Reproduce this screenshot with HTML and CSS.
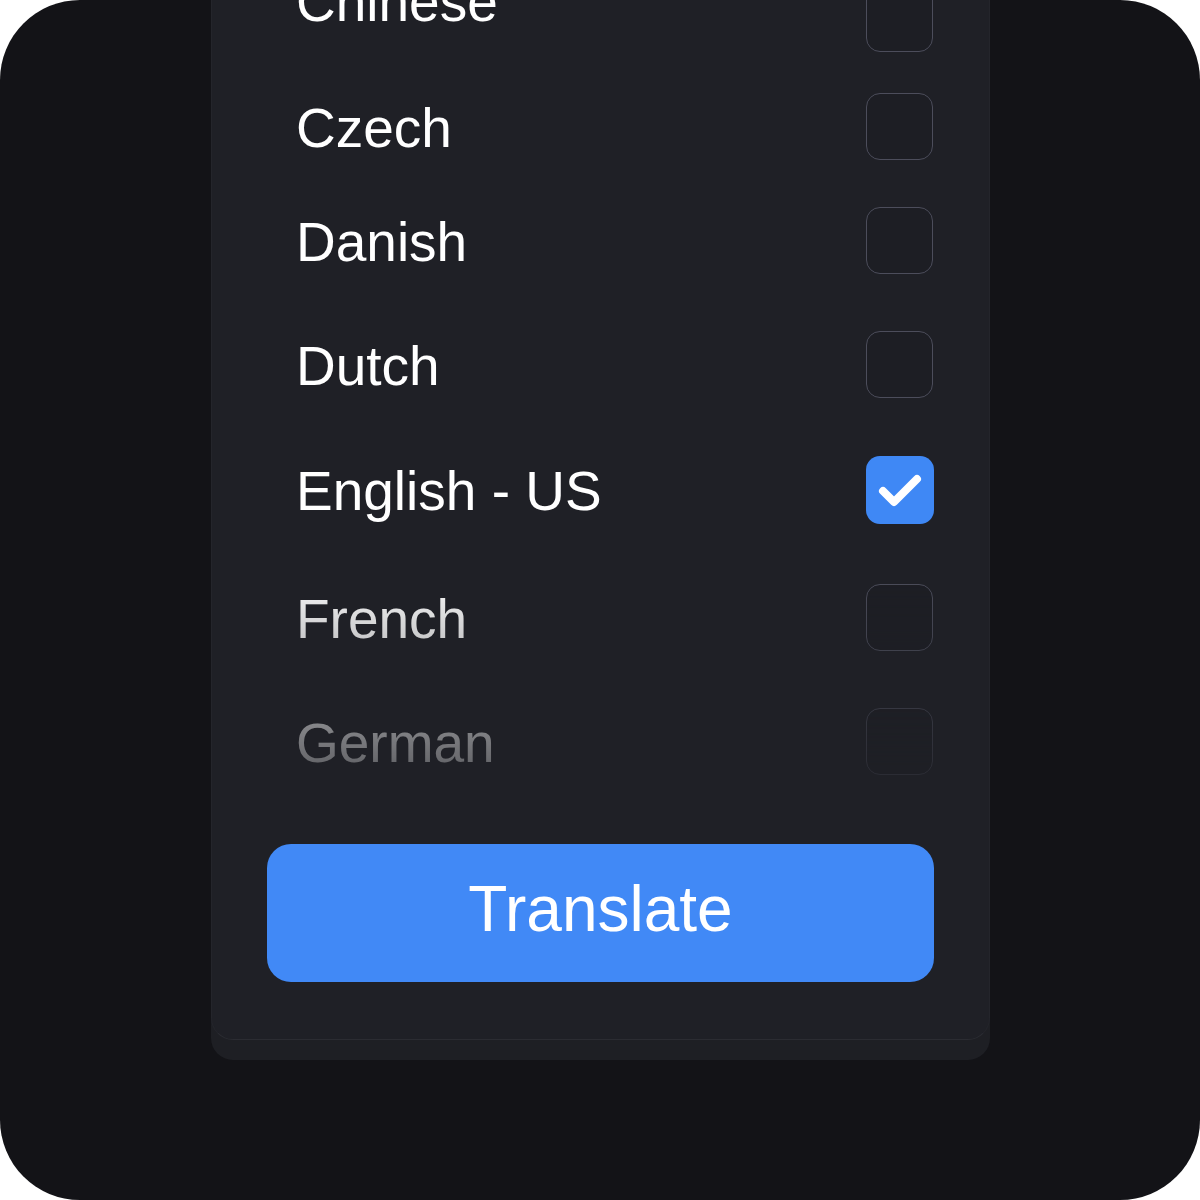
FILE: index.html
```html
<!DOCTYPE html>
<html lang="en">
<head>
<meta charset="utf-8">
<title>Translate</title>
<link rel="stylesheet" href="styles.css">
</head>
<body>
<div class="frame">
  <div class="card">
    <ul class="lang-list">
      <li class="row"><span class="label">Chinese</span><span class="box"></span></li>
      <li class="row"><span class="label">Czech</span><span class="box"></span></li>
      <li class="row"><span class="label">Danish</span><span class="box"></span></li>
      <li class="row"><span class="label">Dutch</span><span class="box"></span></li>
      <li class="row"><span class="label">English - US</span><span class="box checked"><svg viewBox="0 0 68 68" width="68" height="68"><path d="M17 35 L28 46 L51 23" fill="none" stroke="#fff" stroke-width="8" stroke-linecap="round" stroke-linejoin="round"/></svg></span></li>
      <li class="row"><span class="label">French</span><span class="box"></span></li>
      <li class="row"><span class="label">German</span><span class="box"></span></li>
    </ul>
    <button class="translate">Translate</button>
  </div>
</div>
</body>
</html>
```
FILE: styles.css
```css
html, body {
  margin: 0;
  padding: 0;
  background: #ffffff;
}

.frame {
  width: 1200px;
  height: 1200px;
  background: #131317;
  border-radius: 80px;
  overflow: hidden;
  display: flex;
  justify-content: center;
  align-items: flex-start;
  font-family: "Liberation Sans", Arial, sans-serif;
}

.card {
  width: 779px;
  margin-top: -100px;
  margin-left: 1px;
  box-sizing: border-box;
  background: #1f2026;
  border-left: 1px solid #24252b;
  border-right: 1px solid #24252b;
  border-bottom: 1px solid #2b2c32;
  border-radius: 0 0 22px 22px;
  box-shadow: 0 20px 0 0 #1e1f24;
  padding: 0 55px 57px 55px;
  display: flex;
  flex-direction: column;
}

.lang-list {
  list-style: none;
  margin: 0;
  padding: 85px 0 0 0;
  display: flex;
  flex-direction: column;
  -webkit-mask-image: linear-gradient(to bottom, #000 0, #000 672px, rgba(0,0,0,0.28) 100%);
  mask-image: linear-gradient(to bottom, #000 0, #000 672px, rgba(0,0,0,0.28) 100%);
}

.row {
  height: 67px;
  display: flex;
  align-items: center;
  justify-content: space-between;
  padding-left: 29px;
}

.row:nth-child(1) .label { top: -16px; }
.row:nth-child(2) { margin-top: 41px; }
.row:nth-child(3) { margin-top: 47px; }
.row:nth-child(4) { margin-top: 57px; }
.row:nth-child(5) { margin-top: 58px; }
.row:nth-child(6) { margin-top: 61px; }
.row:nth-child(7) { margin-top: 57px; }

.label {
  color: #ffffff;
  font-size: 55px;
  line-height: 1;
  position: relative;
  top: 2px;
}

.box {
  width: 67px;
  height: 67px;
  margin-right: 1px;
  box-sizing: border-box;
  border: 1.5px solid #4c4d5b;
  border-radius: 14px;
  background: #1d1e24;
  display: flex;
  align-items: center;
  justify-content: center;
}

.box.checked {
  width: 68px;
  height: 68px;
  margin-right: 0;
  border: none;
  background: #3f88f5;
}

.box svg {
  display: block;
}

.translate {
  margin-top: 69px;
  height: 138px;
  width: 100%;
  border: none;
  border-radius: 24px;
  background: #4189f6;
  color: #ffffff;
  font-family: "Liberation Sans", Arial, sans-serif;
  font-size: 64px;
  line-height: 1;
  padding: 0 0 8px 0;
  cursor: pointer;
}
```
